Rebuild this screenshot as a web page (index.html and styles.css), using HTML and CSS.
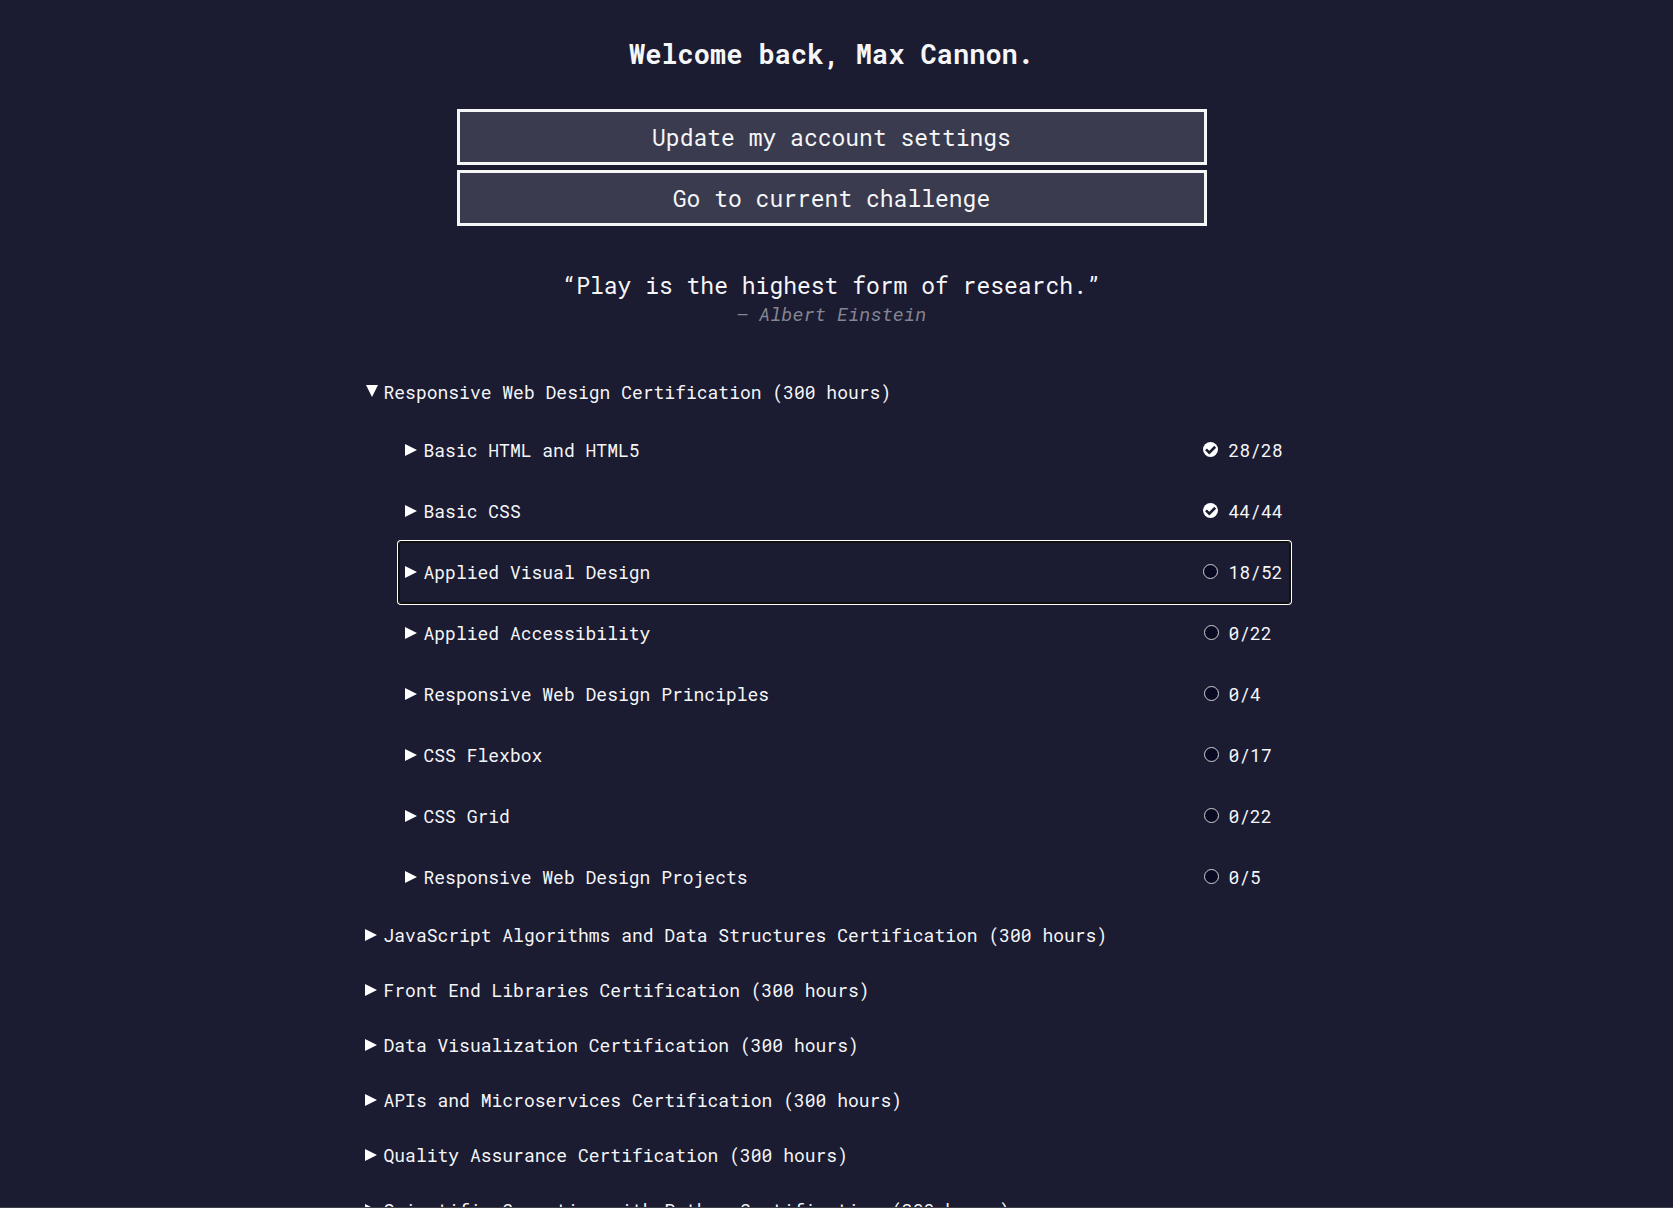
FILE: index.html
```html
<!DOCTYPE html>
<html lang="en">
<head>
<meta charset="utf-8">
<title>Learn to code</title>
<link rel="stylesheet" href="styles.css">
</head>
<body>
<svg class="sprite" aria-hidden="true">
  <symbol id="closed" viewBox="0 0 14 14"><path d="M0 1 12 7 0 13Z" fill="#fff"/></symbol>
  <symbol id="open" viewBox="0 0 14 14"><path d="M1 0H13L7 12Z" fill="#fff"/></symbol>
  <symbol id="done" viewBox="0 0 15 15"><circle cx="7.5" cy="7.5" r="7.5" fill="#fff"/><path d="M3 7.4 6.3 10.6 12.2 4.8" fill="none" stroke="#1b1b32" stroke-width="2.6"/></symbol>
  <symbol id="todo" viewBox="0 0 15 15"><circle cx="7.5" cy="7.5" r="7" fill="#0a0a23" stroke="#d0d0d5"/></symbol>
</svg>
<main class="page">
  <h1 class="title">Welcome back, Max Cannon.</h1>
  <nav class="actions" aria-label="Account">
    <a class="action" href="#settings">Update my account settings</a>
    <a class="action" href="#challenge">Go to current challenge</a>
  </nav>
  <blockquote class="quote">
    <p class="quote-text">“Play is the highest form of research.”</p>
    <footer><cite class="quote-author">— Albert Einstein</cite></footer>
  </blockquote>
  <ul class="map">
    <li>
      <button class="row" type="button" aria-expanded="true"><svg class="arrow"><use href="#open"/></svg>Responsive Web Design Certification (300 hours)</button>
      <ul class="blocks">
        <li><button class="row block" type="button"><svg class="arrow"><use href="#closed"/></svg>Basic HTML and HTML5<span class="progress"><svg class="status"><use href="#done"/></svg><span class="count">28/28</span></span></button></li>
        <li><button class="row block" type="button"><svg class="arrow"><use href="#closed"/></svg>Basic CSS<span class="progress"><svg class="status"><use href="#done"/></svg><span class="count">44/44</span></span></button></li>
        <li><button class="row block current" type="button"><svg class="arrow"><use href="#closed"/></svg>Applied Visual Design<span class="progress"><svg class="status"><use href="#todo"/></svg><span class="count">18/52</span></span></button></li>
        <li><button class="row block" type="button"><svg class="arrow"><use href="#closed"/></svg>Applied Accessibility<span class="progress"><svg class="status"><use href="#todo"/></svg><span class="count">0/22</span></span></button></li>
        <li><button class="row block" type="button"><svg class="arrow"><use href="#closed"/></svg>Responsive Web Design Principles<span class="progress"><svg class="status"><use href="#todo"/></svg><span class="count">0/4</span></span></button></li>
        <li><button class="row block" type="button"><svg class="arrow"><use href="#closed"/></svg>CSS Flexbox<span class="progress"><svg class="status"><use href="#todo"/></svg><span class="count">0/17</span></span></button></li>
        <li><button class="row block" type="button"><svg class="arrow"><use href="#closed"/></svg>CSS Grid<span class="progress"><svg class="status"><use href="#todo"/></svg><span class="count">0/22</span></span></button></li>
        <li><button class="row block" type="button"><svg class="arrow"><use href="#closed"/></svg>Responsive Web Design Projects<span class="progress"><svg class="status"><use href="#todo"/></svg><span class="count">0/5</span></span></button></li>
      </ul>
    </li>
    <li><button class="row" type="button"><svg class="arrow"><use href="#closed"/></svg>JavaScript Algorithms and Data Structures Certification (300 hours)</button></li>
    <li><button class="row" type="button"><svg class="arrow"><use href="#closed"/></svg>Front End Libraries Certification (300 hours)</button></li>
    <li><button class="row" type="button"><svg class="arrow"><use href="#closed"/></svg>Data Visualization Certification (300 hours)</button></li>
    <li><button class="row" type="button"><svg class="arrow"><use href="#closed"/></svg>APIs and Microservices Certification (300 hours)</button></li>
    <li><button class="row" type="button"><svg class="arrow"><use href="#closed"/></svg>Quality Assurance Certification (300 hours)</button></li>
    <li><button class="row" type="button"><svg class="arrow"><use href="#closed"/></svg>Scientific Computing with Python Certification (300 hours)</button></li>
  </ul>
</main>
</body>
</html>
```
FILE: styles.css
```css
* {
  box-sizing: border-box;
}

body {
  margin: 0;
  background: #1b1b32;
  color: #f5f6f7;
  font-family: "Roboto Mono", "Liberation Mono", monospace;
  font-size: 18px;
  line-height: 26px;
}

.sprite {
  display: none;
}

.page {
  height: 100vh;
  overflow-y: auto;
  scrollbar-width: none;
  padding: 35px 10px 0 0;
  border-bottom: 1px solid #3f3f48;
}

.title {
  margin: 0 0 36px;
  font-size: 27px;
  line-height: 38px;
  font-weight: 700;
  text-align: center;
}

.actions {
  display: flex;
  flex-direction: column;
  gap: 5px;
  max-width: 750px;
  margin: 0 auto 43px;
}

.action {
  padding: 9px 12px;
  border: 3px solid #f5f6f7;
  background: #3b3b4f;
  color: #f5f6f7;
  font-size: 23px;
  line-height: 32px;
  text-align: center;
  text-decoration: none;
}

.quote {
  margin: 0 0 38px;
  text-align: center;
}

.quote-text {
  margin: 0;
  font-size: 23px;
  line-height: 32px;
}

.quote-text + footer {
  height: 26px;
}

.quote-author {
  color: #858591;
  font-size: 19px;
  font-style: italic;
}

.map,
.blocks {
  margin: 0;
  padding: 0;
  list-style: none;
}

.map {
  max-width: 946px;
  margin: 0 auto;
}

.blocks {
  padding: 0 15px 0 40px;
}

.row {
  display: flex;
  align-items: center;
  gap: 5px;
  width: 100%;
  min-height: 55px;
  padding: 0 6px 2px 5px;
  border: 1px solid transparent;
  background: none;
  color: inherit;
  font: inherit;
  text-align: left;
}

.block {
  min-height: 61px;
}

.current {
  border-color: #101010;
  border-radius: 2px;
  box-shadow: 0 0 0 1px #101010, 0 0 0 2px #fff;
}

.arrow {
  flex: none;
  width: 14px;
  height: 14px;
  margin-top: 1px;
}

.progress {
  display: flex;
  align-items: center;
  gap: 10px;
  margin-left: auto;
}

.status {
  flex: none;
  width: 15px;
  height: 15px;
}

.count {
  min-width: 54px;
}
```
